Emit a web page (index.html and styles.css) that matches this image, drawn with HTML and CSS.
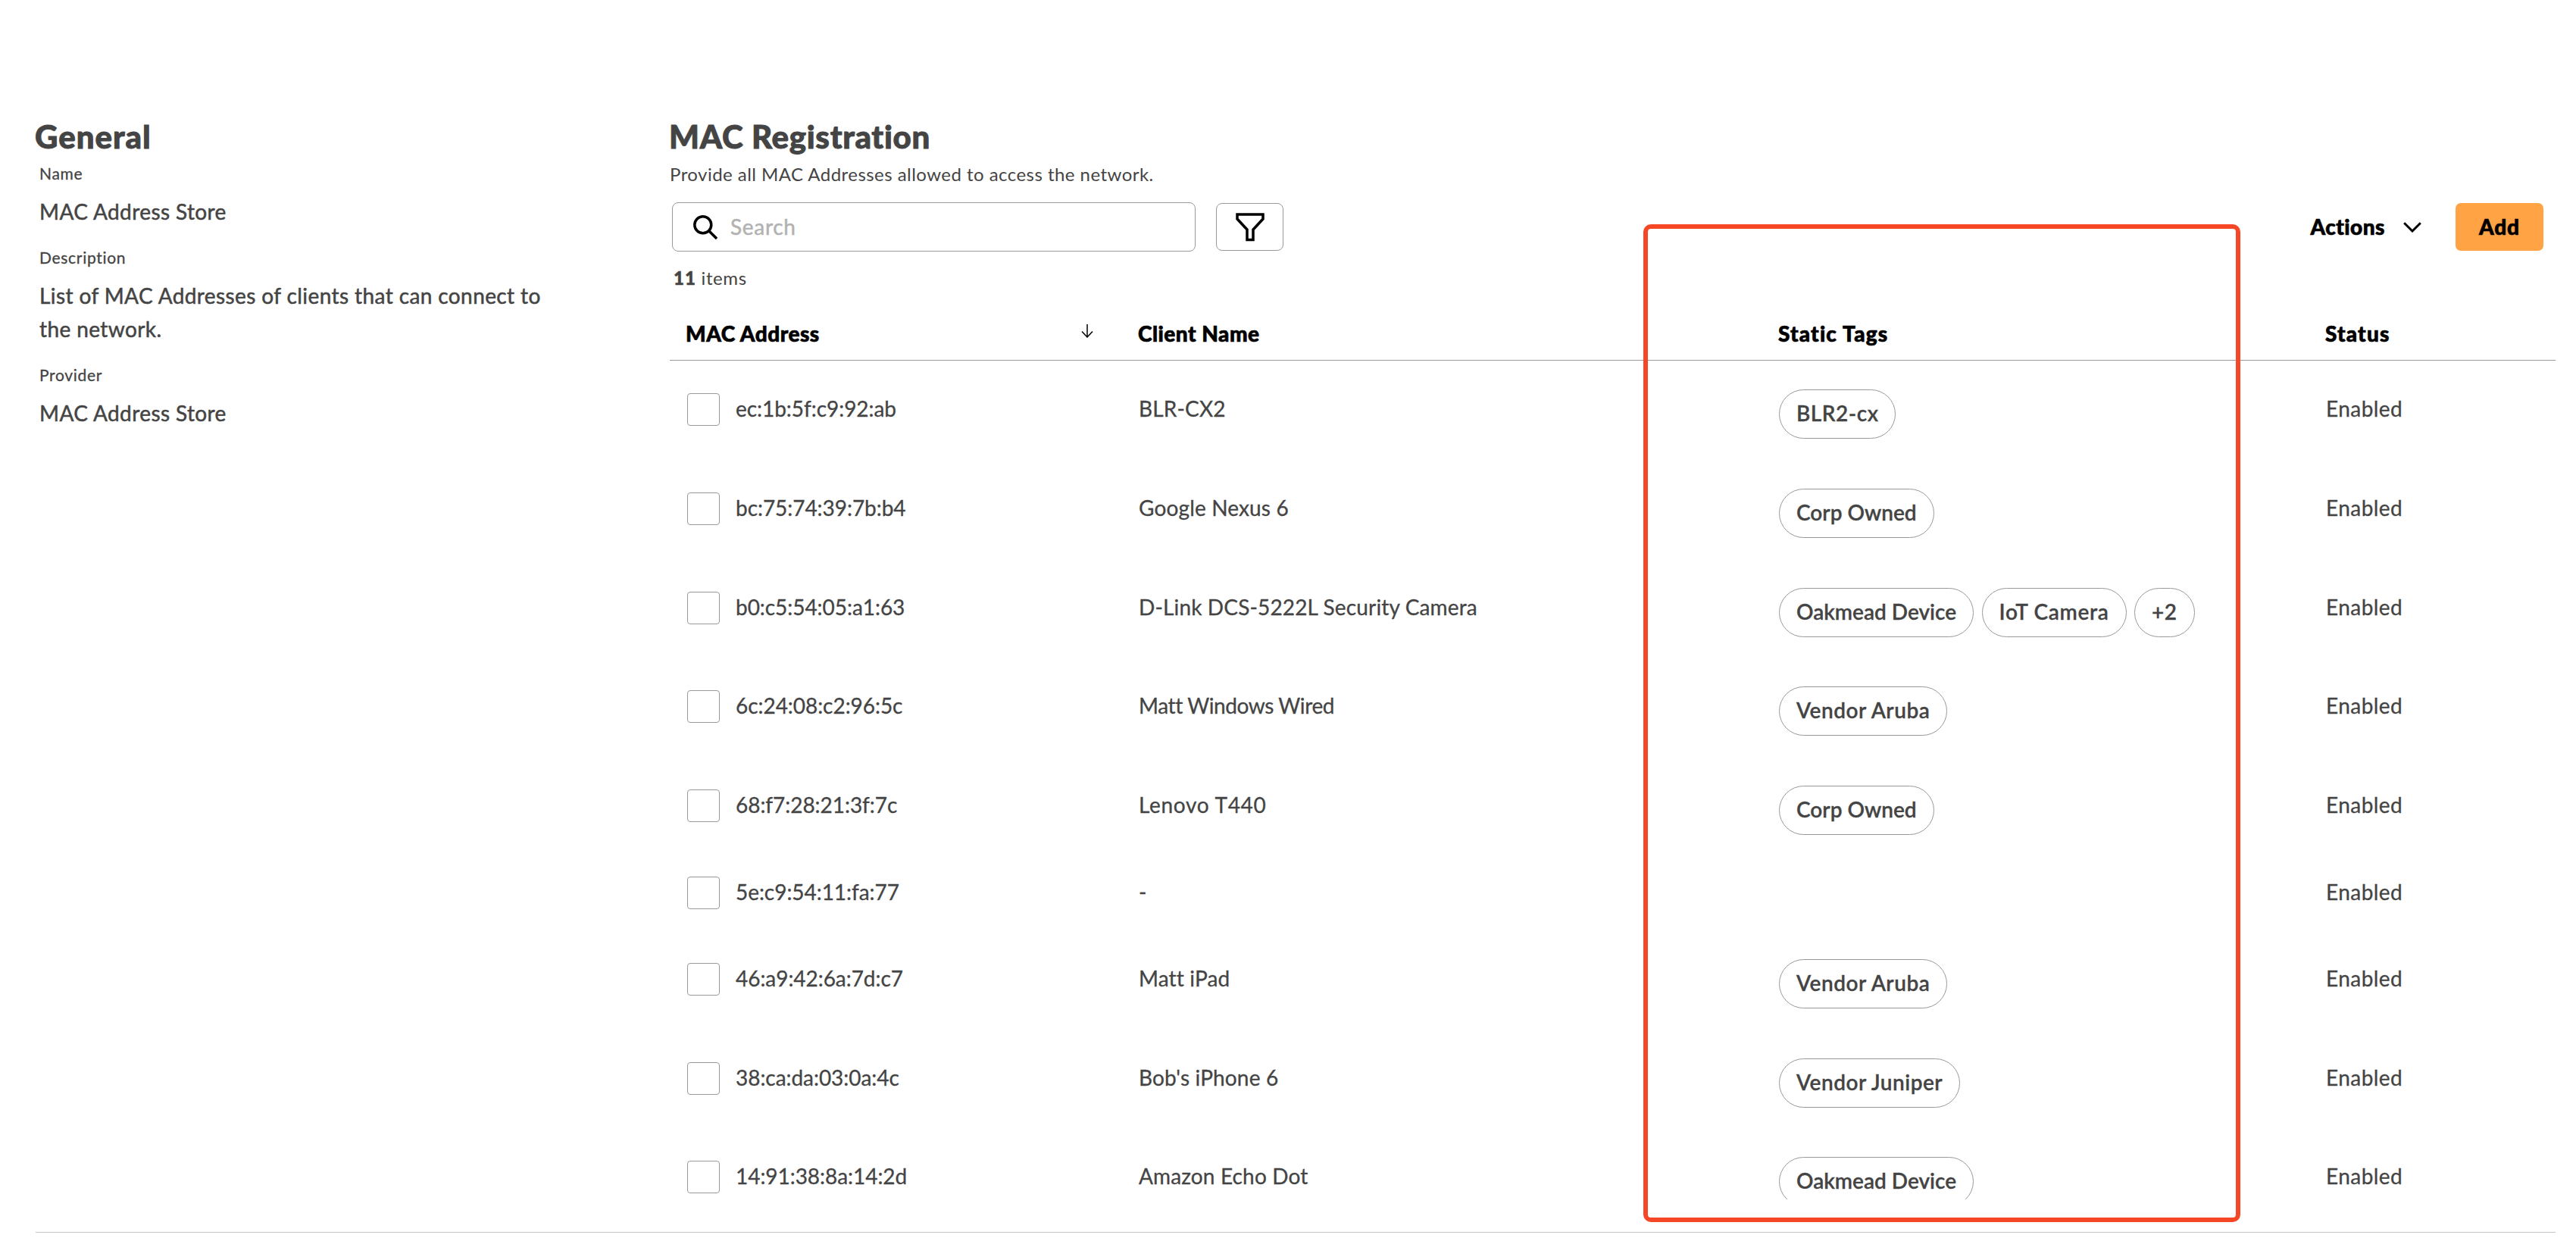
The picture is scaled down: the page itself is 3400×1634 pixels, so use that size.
FILE: index.html
```html
<!DOCTYPE html>
<html lang="en">
<head>
<meta charset="utf-8">
<title>MAC Registration</title>
<link rel="stylesheet" href="styles.css">
</head>
<body>
<div class="page">
  <aside class="general">
    <h2 class="title title-general">General</h2>
    <dl class="details">
      <dt>Name</dt><dd>MAC Address Store</dd>
      <dt>Description</dt><dd>List of MAC Addresses of clients that can connect to the network.</dd>
      <dt>Provider</dt><dd>MAC Address Store</dd>
    </dl>
  </aside>
  <main class="registration">
    <h2 class="title">MAC Registration</h2>
    <p class="subtitle">Provide all MAC Addresses allowed to access the network.</p>
    <div class="toolbar">
      <div class="search">
        <svg class="icon-search" viewBox="0 0 32 32"><circle cx="12.8" cy="12.8" r="11"/><path d="M20.500 20.500 31 31"/></svg>
        <span>Search</span>
      </div>
      <button class="filter" aria-label="Filter"><svg class="icon-filter" viewBox="0 0 38 38"><path d="M2 2H36V8L23 22V35.500H15V22L2 8Z"/></svg></button>
      <div class="actions"><span>Actions</span><svg class="icon-chevron" viewBox="0 0 24 14"><path d="M1.200 1.200 12 12 22.800 1.200"/></svg></div>
      <button class="add">Add</button>
    </div>
    <p class="count"><b>11</b> items</p>
    <div class="row head">
      <div class="cell sorted"><span>MAC Address</span><svg class="icon-sort" viewBox="0 0 16 18"><path d="M8 0V17M1 9.500 8 17 15 9.500"/></svg></div>
      <div class="cell">Client Name</div>
      <div class="cell wide">Static Tags</div>
      <div class="cell wide">Status</div>
    </div>
    <div class="rows">
      <div class="row"><div class="cell mac"><i class="box"></i><span>ec:1b:5f:c9:92:ab</span></div><div class="cell">BLR-CX2</div><div class="cell tags"><span class="tag">BLR2-cx</span></div><div class="cell status">Enabled</div></div>
      <div class="row"><div class="cell mac"><i class="box"></i><span>bc:75:74:39:7b:b4</span></div><div class="cell">Google Nexus 6</div><div class="cell tags"><span class="tag snug">Corp Owned</span></div><div class="cell status">Enabled</div></div>
      <div class="row"><div class="cell mac"><i class="box"></i><span>b0:c5:54:05:a1:63</span></div><div class="cell">D-Link DCS-5222L Security Camera</div><div class="cell tags"><span class="tag snug">Oakmead Device</span><span class="tag open">IoT Camera</span><span class="tag">+2</span></div><div class="cell status">Enabled</div></div>
      <div class="row"><div class="cell mac"><i class="box"></i><span>6c:24:08:c2:96:5c</span></div><div class="cell narrow">Matt Windows Wired</div><div class="cell tags"><span class="tag">Vendor Aruba</span></div><div class="cell status">Enabled</div></div>
      <div class="row"><div class="cell mac"><i class="box"></i><span>68:f7:28:21:3f:7c</span></div><div class="cell loose">Lenovo T440</div><div class="cell tags"><span class="tag snug">Corp Owned</span></div><div class="cell status">Enabled</div></div>
      <div class="row untagged"><div class="cell mac"><i class="box"></i><span>5e:c9:54:11:fa:77</span></div><div class="cell">-</div><div class="cell tags"></div><div class="cell status">Enabled</div></div>
      <div class="row"><div class="cell mac"><i class="box"></i><span>46:a9:42:6a:7d:c7</span></div><div class="cell">Matt iPad</div><div class="cell tags"><span class="tag">Vendor Aruba</span></div><div class="cell status">Enabled</div></div>
      <div class="row"><div class="cell mac"><i class="box"></i><span>38:ca:da:03:0a:4c</span></div><div class="cell">Bob's iPhone 6</div><div class="cell tags"><span class="tag">Vendor Juniper</span></div><div class="cell status">Enabled</div></div>
      <div class="row"><div class="cell mac"><i class="box"></i><span>14:91:38:8a:14:2d</span></div><div class="cell">Amazon Echo Dot</div><div class="cell tags"><span class="tag snug">Oakmead Device</span></div><div class="cell status">Enabled</div></div>
    </div>
  </main>
  <div class="highlight"></div>
</div>
</body>
</html>
```
FILE: styles.css
```css
* { box-sizing: border-box; }
body { margin: 0; background: #fff; color: #444; font: 28px/44px Lato, "Noto Sans", sans-serif; font-variant-ligatures: none; }
h2, p, dl, dd, dt { margin: 0; }
.page { position: relative; display: flex; width: 3400px; height: 1634px; padding: 155px 27px 0 47px; overflow: hidden; }
.page::after { content: ""; position: absolute; left: 47px; right: 27px; top: 1626px; height: 1px; background: #c4c4c4; }
.general { width: 837px; }
.title { margin-left: -1px; font-size: 42px; line-height: 50px; font-weight: 900; letter-spacing: .7px; -webkit-text-stroke: .9px; }
.title-general { letter-spacing: 1px; }
.details { width: 700px; padding: 9px 0 0 5px; }
.details dt { font-size: 21px; line-height: 30px; letter-spacing: .7px; -webkit-text-stroke: .3px; }
.details dd { margin: 13px 0 24px; letter-spacing: .4px; -webkit-text-stroke: .5px; }
.registration { flex: 1; }
.subtitle { margin-top: 9px; font-size: 24px; line-height: 32px; letter-spacing: .46px; }
.toolbar { display: flex; align-items: center; height: 65px; margin: 21px 16px 0 3px; }
.search { display: flex; align-items: center; width: 691px; height: 65px; padding-left: 27px; border: 1px solid #999; border-radius: 8px; color: #b2b2b2; line-height: 42px; letter-spacing: .7px; -webkit-text-stroke: .5px; }
.search span { padding-bottom: 1px; }
svg { display: block; fill: none; stroke: #000; flex: none; }
.icon-search { width: 32px; height: 32px; margin-right: 17px; stroke-width: 3.500; }
button { padding: 0; font: inherit; color: #000; }
.filter { display: flex; align-items: center; justify-content: center; width: 89px; height: 63px; margin-left: 27px; background: none; border: 1px solid #999; border-radius: 8px; }
.icon-filter { width: 38px; height: 38px; stroke-width: 3.500; }
.actions { display: flex; align-items: center; margin-left: auto; color: #000; font-weight: 900; letter-spacing: .5px; -webkit-text-stroke: .7px; line-height: 42px; }
.actions span { padding-bottom: 1px; }
.icon-chevron { width: 24px; height: 14px; margin-left: 24px; stroke-width: 3; }
.add { width: 116px; height: 63px; margin-left: 45px; padding-bottom: 2px; background: #ffa344; border: 0; border-radius: 7px; font-weight: 900; letter-spacing: .9px; -webkit-text-stroke: .7px; }
.count { margin: 19px 0 0 5px; font-size: 24px; line-height: 32px; letter-spacing: .6px; }
.count b { font-weight: 900; letter-spacing: 1px; -webkit-text-stroke: .5px; }
.row { display: grid; grid-template-columns: 596px 845px 722px 326px; height: 130.8px; }
.cell { padding: 41px 0 0 23px; letter-spacing: .15px; -webkit-text-stroke: .3px; }
.narrow { letter-spacing: -.4px; }
.loose { letter-spacing: .7px; }
.status { letter-spacing: .45px; }
.head { height: 93px; border-bottom: 1px solid #999; color: #000; font-weight: 900; }
.head .cell { padding: 35px 0 0 22px; letter-spacing: .5px; -webkit-text-stroke: .7px; }
.head .wide { letter-spacing: 1.2px; }
.sorted { display: flex; justify-content: space-between; }
.head .sorted { padding-left: 21px; padding-right: 37px; }
.icon-sort { width: 16px; height: 18px; margin-top: 10px; stroke-width: 1.500; }
.rows { height: 1107px; overflow: hidden; }
.mac { display: flex; letter-spacing: -.05px; }
.box { width: 43px; height: 43px; margin: 2px 21px 0 0; border: 1px solid #999; border-radius: 4px; }
.tags { display: flex; gap: 10.5px; padding-top: 38px; }
.tag { height: 65px; padding: 0 22px; border: 1px solid #999; border-radius: 33px; line-height: 61px; font-weight: 600; letter-spacing: .5px; }
.snug { letter-spacing: 0; }
.open { letter-spacing: .7px; }
.untagged { height: 97.8px; }
.untagged .cell { padding-top: 25px; }
.highlight { position: absolute; left: 2169px; top: 296px; width: 788px; height: 1317px; border: 6px solid #f54725; border-radius: 10px; }
```
